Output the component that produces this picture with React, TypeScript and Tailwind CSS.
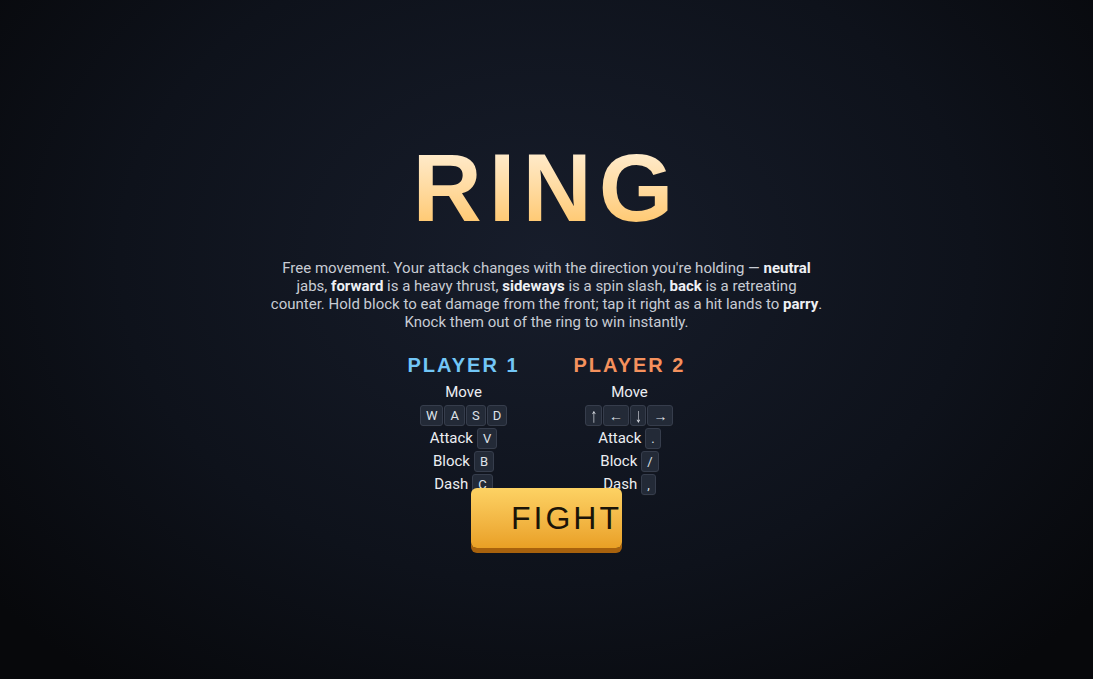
import React from "react";

type Bind = { label: string; keys: string[] };

const players: { name: string; color: string; binds: Bind[] }[] = [
  {
    name: "PLAYER 1",
    color: "text-[#72c6f6]",
    binds: [
      { label: "Move", keys: ["W", "A", "S", "D"] },
      { label: "Attack", keys: ["V"] },
      { label: "Block", keys: ["B"] },
      { label: "Dash", keys: ["C"] },
    ],
  },
  {
    name: "PLAYER 2",
    color: "text-[#f5915d]",
    binds: [
      { label: "Move", keys: ["↑", "←", "↓", "→"] },
      { label: "Attack", keys: ["."] },
      { label: "Block", keys: ["/"] },
      { label: "Dash", keys: [","] },
    ],
  },
];

function Glyph({ k }: { k: string }) {
  // arrows: thin tall vertical ones, wide horizontal ones like the reference
  if (k === "↑" || k === "↓")
    return (
      <span className="inline-block scale-y-[1.55] font-['Noto_Sans',sans-serif] text-[13px]">
        {k}
      </span>
    );
  if (k === "←" || k === "→")
    return <span className="font-['Noto_Sans',sans-serif] text-[14px]">{k}</span>;
  return <>{k}</>;
}

function Key({ k }: { k: string }) {
  const vertical = k === "↑" || k === "↓";
  return (
    <span
      className={`inline-flex h-[21px] items-center justify-center rounded-[3px] border border-[#363d4c] bg-[#232a37] font-['Roboto',sans-serif] text-[13px] leading-none text-[#dfe2e8] shadow-[0_1px_0_#141820] ${vertical ? "px-[4px]" : "px-[5px]"}`}
    >
      <Glyph k={k} />
    </span>
  );
}

function Controls({ player }: { player: (typeof players)[number] }) {
  const [move, ...rest] = player.binds;
  return (
    <div className="flex flex-col items-center">
      <h2
        className={`font-['Liberation_Sans',Arial,sans-serif] text-[20px] font-bold leading-[24px] tracking-[2px] ${player.color}`}
      >
        {player.name}
      </h2>
      <div className="mt-[3px] h-[24px] leading-[24px]">{move.label}</div>
      <div className="flex h-[23px] items-center gap-[1px]">
        {move.keys.map((k) => (
          <Key key={k} k={k} />
        ))}
      </div>
      {rest.map((b) => (
        <div key={b.label} className="flex h-[23px] items-center gap-[4px]">
          <span>{b.label}</span>
          <Key k={b.keys[0]} />
        </div>
      ))}
    </div>
  );
}

export default function App() {
  return (
    <div className="flex min-h-screen flex-col items-center bg-[radial-gradient(ellipse_65%_80%_at_50%_38%,#171d2b_0%,#0e121b_60%,#07080b_100%)] pt-[140px] font-['Roboto',sans-serif] text-[15px] text-[#eceef2]">
      {/* Title */}
      <h1 className="bg-gradient-to-b from-[#fff1da] to-[#ffc35e] bg-clip-text font-['Liberation_Sans',Arial,sans-serif] text-[96px] font-bold leading-none tracking-[7px] text-transparent">
        RING
      </h1>

      <p className="mt-[23px] max-w-[557px] text-center text-[15px] leading-[18px] text-[#c8ccd4]">
        Free movement. Your attack changes with the direction you're holding —{" "}
        <b className="text-[#eef0f4]">neutral</b> jabs,{" "}
        <b className="text-[#eef0f4]">forward</b> is a heavy thrust,{" "}
        <b className="text-[#eef0f4]">sideways</b> is a spin slash,{" "}
        <b className="text-[#eef0f4]">back</b> is a retreating counter. Hold
        block to eat damage from the front; tap it right as a hit lands to{" "}
        <b className="text-[#eef0f4]">parry</b>. Knock them out of the ring to
        win instantly.
      </p>

      <div className="mt-[22px] flex gap-[54px]">
        {players.map((p) => (
          <Controls key={p.name} player={p} />
        ))}
      </div>

      {/* Start button */}
      <button className="relative z-10 -mt-[8px] h-[60px] w-[151px] overflow-visible whitespace-nowrap rounded-[6px] bg-gradient-to-b from-[#fdd263] to-[#e9a024] pl-[40px] text-left font-['Liberation_Sans',Arial,sans-serif] text-[32px] leading-none tracking-[3px] text-[#1a1408] shadow-[0_5px_0_#a8620d]">
        FIGHT
      </button>
    </div>
  );
}
